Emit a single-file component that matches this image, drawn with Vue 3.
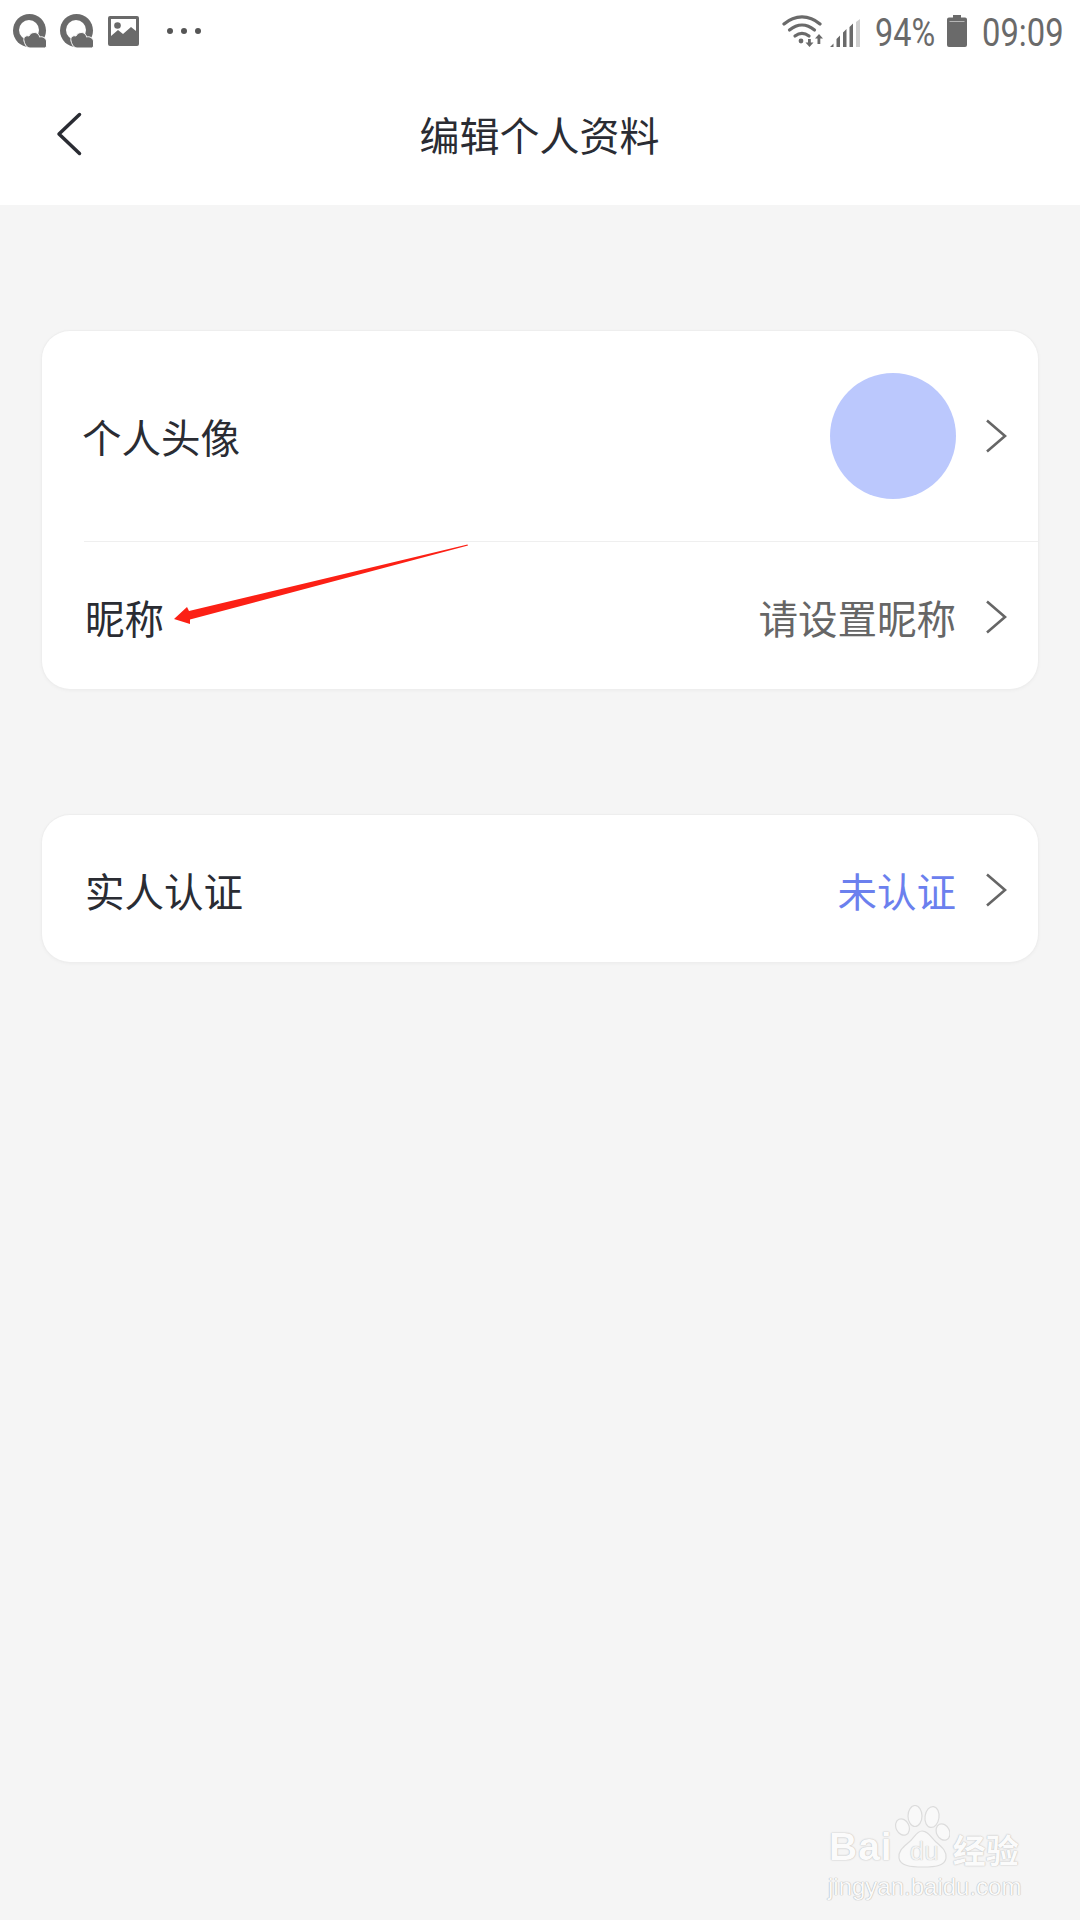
<script setup>
const leftIcons = ['q1', 'q2']
</script>

<template>
  <div class="page">
    <header class="head">
      <div class="status">
        <div class="status-left">
          <svg v-for="i in leftIcons" :key="i" class="q" viewBox="0 0 34 34">
            <circle cx="16.500" cy="16.500" r="16.500" fill="#6a6a6a"/>
            <circle cx="16" cy="16" r="10" fill="#fff"/>
            <path fill="#6a6a6a" stroke="#fff" stroke-width="1" d="M11 27c-1-4 2-6 5-5 1-3 6-5 9-2 1 1 1.500 2 1.500 3 3-1 6.500 1 7 4v5a2 2 0 0 1-2 2H17c-3 0-5-3-6-7z"/>
          </svg>
          <svg class="pic" viewBox="0 0 31 30">
            <path fill-rule="evenodd" fill="#6a6a6a" d="M2 0h27a2 2 0 0 1 2 2v26a2 2 0 0 1-2 2H2a2 2 0 0 1-2-2V2a2 2 0 0 1 2-2zM3 3v17l7-6 5 4 8-7 5 4V3z"/>
            <circle cx="9.500" cy="9.500" r="3.300" fill="#6a6a6a"/>
          </svg>
          <div class="dots"><i></i><i></i><i></i></div>
        </div>
        <div class="status-right">
          <svg class="wifi" viewBox="0 0 43 32">
            <g fill="none" stroke="#6a6a6a" stroke-width="3.200" stroke-linecap="round">
              <path d="M2 9c11-9.500 25-9.500 36 0"/>
              <path d="M7.500 15c8-6.500 17-6.500 25 0"/>
              <path d="M13 21c4.500-3.500 9.500-3.500 14 0"/>
            </g>
            <circle cx="19" cy="26" r="2.400" fill="#6a6a6a"/>
            <path fill="#6a6a6a" d="M26 24h2.800v3.500h2.700l-4 4.500-4-4.500H26zM37 19l4 4.500h-2.700V29h-2.800v-5.500H33z"/>
          </svg>
          <svg class="signal" viewBox="0 0 30 28">
            <path fill="#6a6a6a" d="M0 28l3.500-3.500V28zM6.500 28v-8l3.500-3.500V28zM13 28V13.500l3.500-3.500v18zM19.500 28V8l3.500-3.500V28z"/>
            <path fill="#cfcfcf" d="M26 28V3l4-3v28z"/>
          </svg>
          <span class="pct">94%</span>
          <svg class="bat" viewBox="0 0 20 32">
            <path fill="#6a6a6a" d="M6 0h8v2.500h4a2 2 0 0 1 2 2V30a2 2 0 0 1-2 2H2a2 2 0 0 1-2-2V4.500a2 2 0 0 1 2-2h4z"/>
            <rect x="2.500" y="6" width="15" height="1" fill="#b5b5b5"/>
          </svg>
          <span class="time">09:09</span>
        </div>
      </div>
      <nav class="nav">
        <svg class="back" viewBox="0 0 26 44">
          <path d="M23.500 2.500L3 22l20.500 19.500" fill="none" stroke="#2a2c33" stroke-width="3.500" stroke-linecap="round" stroke-linejoin="round"/>
        </svg>
        <h1 class="title">编辑个人资料</h1>
      </nav>
    </header>

    <main class="content">
      <section class="card">
        <div class="row row-tall">
          <span class="label">个人头像</span>
          <div class="side">
            <div class="avatar"></div>
            <svg class="chev" viewBox="0 0 22 36"><path d="M2 2.500L20 18 2 33.500" fill="none" stroke="#666" stroke-width="2.600"/></svg>
          </div>
        </div>
        <div class="row row-low">
          <span class="label">昵称</span>
          <div class="side">
            <span class="value">请设置昵称</span>
            <svg class="chev" viewBox="0 0 22 36"><path d="M2 2.500L20 18 2 33.500" fill="none" stroke="#666" stroke-width="2.600"/></svg>
          </div>
        </div>
      </section>

      <section class="card">
        <div class="row row-single">
          <span class="label">实人认证</span>
          <div class="side">
            <span class="value link">未认证</span>
            <svg class="chev" viewBox="0 0 22 36"><path d="M2 2.500L20 18 2 33.500" fill="none" stroke="#666" stroke-width="2.600"/></svg>
          </div>
        </div>
      </section>
    </main>

    <svg class="arrow" viewBox="0 0 1080 700">
      <path fill="#fc2015" d="M174 619L187 607 189 611 467.500 544.500 468 545.500 190 619.500 190 624z"/>
    </svg>

    <div class="mark">
      <div class="mark-top">
        <span class="bai">Bai</span>
        <div class="paw">
          <svg viewBox="0 0 55 63">
            <g fill="#f9f9f9" stroke="#dcdcdc" stroke-width="1.200">
              <ellipse cx="7.500" cy="22" rx="6.500" ry="8.500" transform="rotate(-25 7.500 22)"/>
              <ellipse cx="20" cy="11" rx="7" ry="10.500"/>
              <ellipse cx="37" cy="12" rx="7" ry="10.500" transform="rotate(8 37 12)"/>
              <ellipse cx="48" cy="27" rx="6.500" ry="8.500" transform="rotate(-25 48 27)"/>
              <path d="M27 26c6 0 9 6 14 11 7 6 11 10 10 16-1 8-11 9-23 9s-23-1-24-9c-1-6 3-10 9-15 6-4 8-12 14-12z"/>
            </g>
          </svg>
          <span class="du">du</span>
        </div>
        <span class="jy">经验</span>
      </div>
      <div class="url">jingyan.baidu.com</div>
    </div>
  </div>
</template>

<style scoped>
.page {
  position: relative;
  width: 1080px;
  height: 1920px;
  overflow: hidden;
  background: #f5f5f5;
  font-family: "Noto Sans CJK SC", "Noto Sans", sans-serif;
}
.head {
  height: 205px;
  background: #fff;
  display: flex;
  flex-direction: column;
}
.status {
  height: 62px;
  padding: 0 18px 0 13px;
  display: flex;
  justify-content: space-between;
  align-items: center;
}
.status-left {
  display: flex;
  align-items: center;
}
.q {
  width: 34px;
  height: 34px;
  margin-right: 13px;
}
.pic {
  width: 31px;
  height: 30px;
  margin-left: 1px;
}
.dots {
  display: flex;
  gap: 8px;
  margin-left: 28px;
}
.dots i {
  width: 6px;
  height: 6px;
  border-radius: 50%;
  background: #555;
}
.status-right {
  display: flex;
  align-items: center;
  color: #6a6a6a;
  font-family: Roboto, sans-serif;
}
.wifi {
  width: 43px;
  height: 32px;
}
.signal {
  width: 30px;
  height: 28px;
  margin-left: 5px;
  margin-top: 4px;
}
.pct {
  width: 59px;
  margin-left: 15px;
  margin-top: 3px;
  font-size: 39px;
  line-height: 40px;
  white-space: nowrap;
  transform: scaleX(0.83);
  transform-origin: left center;
}
.bat {
  width: 20px;
  height: 32px;
  margin-left: 13px;
}
.time {
  width: 80px;
  margin-left: 15px;
  margin-top: 3px;
  font-size: 39px;
  line-height: 40px;
  white-space: nowrap;
  transform: scaleX(0.84);
  transform-origin: left center;
}
.nav {
  position: relative;
  flex: 1;
  display: flex;
  align-items: center;
  justify-content: center;
  padding-right: 1px;
}
.back {
  position: absolute;
  left: 56px;
  top: 50px;
  width: 26px;
  height: 44px;
}
.title {
  margin: 0;
  font-size: 40px;
  font-weight: 400;
  line-height: 56px;
  color: #2a2c33;
}
.content {
  padding: 126px 42px 0;
  display: flex;
  flex-direction: column;
  gap: 126px;
}
.card {
  background: #fff;
  border-radius: 28px;
  box-shadow: 0 0 0 1px #eeeeee, 0 1px 4px rgba(0, 0, 0, 0.05);
}
.row {
  display: flex;
  justify-content: space-between;
  align-items: center;
  padding-right: 31px;
}
.row-tall {
  height: 210px;
  padding-left: 40px;
}
.row-low {
  height: 148px;
  margin-left: 42px;
  padding-left: 1px;
  padding-top: 2px;
  border-top: 1px solid #efefef;
  box-sizing: border-box;
}
.row-single {
  height: 147px;
  padding-left: 43px;
  padding-top: 2px;
  box-sizing: border-box;
}
.label {
  font-size: 39.500px;
  line-height: 56px;
  color: #2a2c33;
}
.side {
  display: flex;
  align-items: center;
}
.avatar {
  width: 126px;
  height: 126px;
  border-radius: 50%;
  background: #bbc8fd;
}
.value {
  font-size: 39.500px;
  line-height: 56px;
  color: #666;
}
.link {
  color: #6b80ee;
}
.chev {
  width: 22px;
  height: 36px;
  margin-left: 29px;
}
.arrow {
  position: absolute;
  left: 0;
  top: 0;
  width: 1080px;
  height: 700px;
  pointer-events: none;
}
.mark {
  position: absolute;
  left: 829px;
  top: 1805px;
  width: 200px;
  color: #fbfbfb;
  font-family: "Liberation Sans", sans-serif;
}
.mark-top {
  display: flex;
  align-items: flex-end;
  height: 66px;
}
.bai {
  margin-bottom: 2px;
  font-size: 39px;
  line-height: 44px;
  font-weight: 700;
  letter-spacing: 1px;
  text-shadow: 0 0 1px #b8b8b8, 0 0 2px #cfcfcf;
}
.paw {
  position: relative;
  width: 55px;
  height: 66px;
  margin-left: 2px;
}
.paw svg {
  width: 55px;
  height: 63px;
  display: block;
}
.du {
  position: absolute;
  left: 15px;
  top: 33px;
  font-size: 26px;
  line-height: 26px;
  color: #f3f3f3;
  text-shadow: 0 0 1px #aaa;
}
.jy {
  margin-left: 3px;
  font-family: "Noto Sans CJK SC", sans-serif;
  font-size: 33px;
  line-height: 44px;
  font-weight: 700;
  text-shadow: 0 0 1px #b8b8b8, 0 0 2px #cfcfcf;
}
.url {
  margin-left: -1px;
  margin-top: 2px;
  font-size: 24px;
  line-height: 28px;
  white-space: nowrap;
  color: #fafafa;
  text-shadow: 0 0 1px #b0b0b0, 0 0 1px #b0b0b0;
}
</style>
